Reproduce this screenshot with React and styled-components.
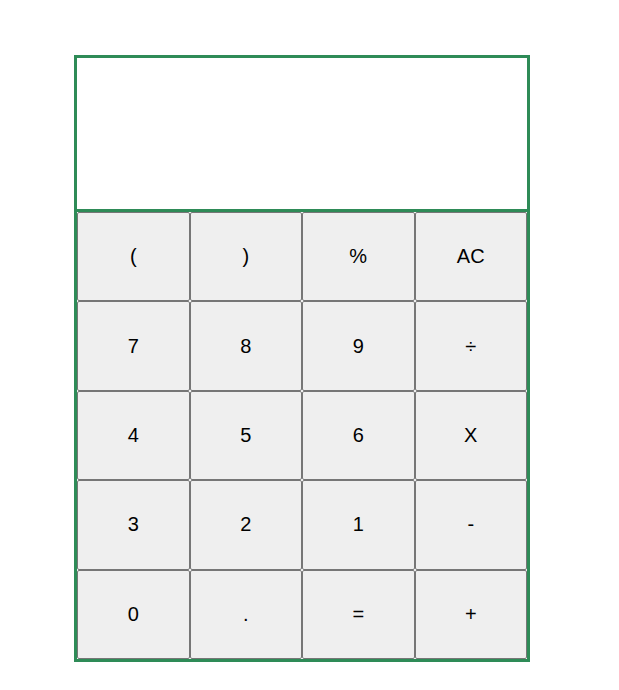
import styled, { createGlobalStyle } from "styled-components";

const GlobalStyle = createGlobalStyle`
  body {
    margin: 0;
    background: #ffffff;
    font-family: "Liberation Sans", Arial, sans-serif;
  }
`;

const Page = styled.div`
  padding: 55px 0 0 74px;
`;

const Calculator = styled.div`
  width: 450px;
  border: 3px solid #2e8b57;
  background: #ffffff;
`;

const Display = styled.div`
  height: 151px;
  border-bottom: 3px solid #2e8b57;
  background: #ffffff;
`;

const Keys = styled.div`
  display: grid;
  grid-template-columns: repeat(4, 1fr);
  grid-auto-rows: 89.4px;
`;

const Key = styled.button`
  margin: 0;
  padding: 0;
  background: #efefef;
  border: 1px solid #767676;
  border-radius: 2px;
  color: #000000;
  font-family: "Liberation Sans", Arial, sans-serif;
  font-size: 20px;
  cursor: pointer;
`;

const keys = [
  "(", ")", "%", "AC",
  "7", "8", "9", "÷",
  "4", "5", "6", "X",
  "3", "2", "1", "-",
  "0", ".", "=", "+",
];

const App = () => {
  return (
    <Page>
      <GlobalStyle />
      <Calculator>
        <Display />
        <Keys>
          {keys.map((k, i) => (
            <Key key={i}>{k}</Key>
          ))}
        </Keys>
      </Calculator>
    </Page>
  );
};

export default App;
